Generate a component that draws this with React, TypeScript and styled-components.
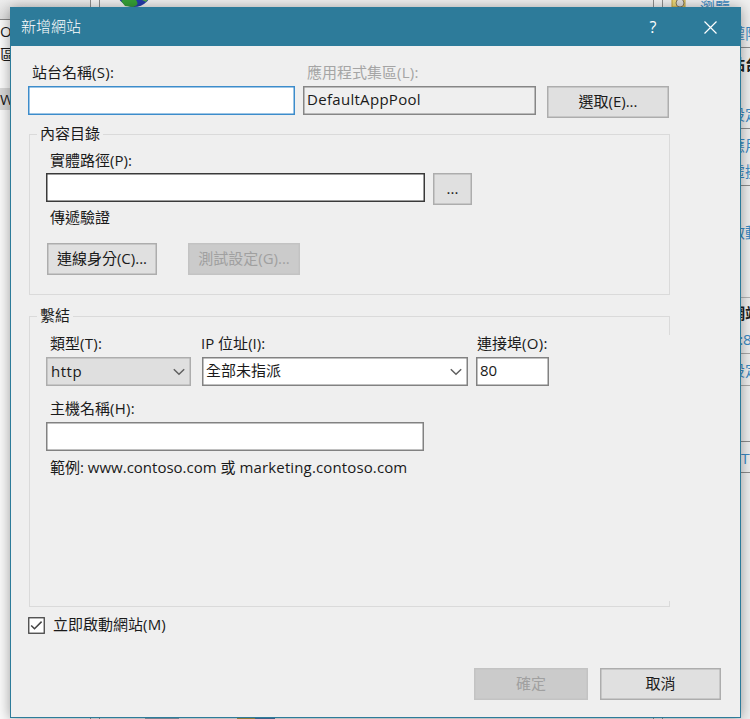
import React from "react";
import styled, { createGlobalStyle } from "styled-components";

const TEAL = "#2d7b9a";
const FACE = "#efefef";

const GlobalStyle = createGlobalStyle`
  * { box-sizing: border-box; }
  body {
    margin: 0;
    font-family: "Open Sans", "Noto Sans CJK TC", sans-serif;
    font-size: 15px;
    color: #1a1a1a;
  }
`;

const Desktop = styled.div`
  position: relative;
  width: 750px;
  height: 719px;
  overflow: hidden;
  background: #f4f4f4;
`;

/* ---- Window behind the dialog ---- */
const Manager = styled.div`
  display: flex;
  width: 860px;
  height: 719px;
  overflow: hidden;
  white-space: nowrap;
`;

const TreePane = styled.div`
  flex: none;
  width: 91px;
  border-right: 1px solid #8f8f8f;
  background: #fbfbfb;
`;

const TreeHeader = styled.div`
  height: 20px;
  background: linear-gradient(#ededed, #dedede);
  border-bottom: 1px solid #858585;
`;

const TreeItem = styled.div<{ $selected?: boolean; $top: number }>`
  height: 22px;
  margin-top: ${(p) => p.$top}px;
  line-height: 22px;
  background: ${(p) => (p.$selected ? "#d9d9d9" : "transparent")};
`;

const Content = styled.div`
  flex: none;
  width: 555px;
  margin-left: 8px;
  display: flex;
  flex-direction: column;
  justify-content: space-between;
  border: solid #8f8f8f;
  border-width: 0 1px;
  background: #f1f1f1;
`;

const ContentHeader = styled.div`
  display: flex;
  align-items: flex-start;
`;

const Globe = styled.svg`
  margin: -29px 0 0 16px;
  flex: none;
`;

const PageTitle = styled.div`
  margin: -24px 0 0 221px;
  line-height: 26px;
  font-size: 18px;
  font-weight: 600;
`;

const FeatureIcons = styled.svg`
  display: block;
`;

const ActionPane = styled.div`
  flex: 1;
  margin-left: 8px;
  background: #f0f0f0;
  border-left: 1px solid #8f8f8f;
`;

const ActionSection = styled.div<{ $height: number; $line?: string }>`
  height: ${(p) => p.$height}px;
  border-bottom: 1px solid ${(p) => p.$line ?? "#8c8c8c"};
`;

const Action = styled.div<{ $top: number; $heading?: boolean; $indent?: number }>`
  display: flex;
  box-sizing: content-box;
  height: 20px;
  line-height: 20px;
  padding-top: ${(p) => p.$top}px;
  padding-left: ${(p) => p.$indent ?? 37}px;
  color: ${(p) => (p.$heading ? "#1e1e1e" : "#3b8ac4")};
  font-weight: ${(p) => (p.$heading ? 700 : 400)};
`;

const FolderIcon = styled.svg`
  flex: none;
  margin: -7px 14px 0 -29px;
`;

const FirstAction = styled.span`
  margin-top: -3px;
`;

/* ---- Dialog ---- */
const Dialog = styled.div`
  position: absolute;
  left: 10px;
  top: 7px;
  width: 731px;
  height: 711px;
  background: ${FACE};
  border: 1px solid ${TEAL};
  box-shadow: 0 1px 13px rgba(0, 0, 0, 0.38);
  white-space: nowrap;
`;

const TitleBar = styled.div`
  display: flex;
  align-items: center;
  height: 38px;
  padding-left: 10px;
  background: ${TEAL};
  color: #fff;
  font-weight: 300;
`;

const TitleText = styled.span`
  flex: 1;
  line-height: 20px;
  padding-bottom: 2px;
`;

const HelpButton = styled.span`
  width: 12px;
  margin-right: 45px;
  text-align: center;
  font-size: 16px;
  font-weight: 400;
`;

const CloseIcon = styled.svg`
  margin-right: 23px;
`;

const Body = styled.div`
  padding: 17px 0 0 17px;
`;

const Row = styled.div<{ $top?: number; $left?: number }>`
  display: flex;
  align-items: flex-start;
  margin-top: ${(p) => p.$top ?? 0}px;
  margin-left: ${(p) => p.$left ?? 0}px;
`;

const Label = styled.div<{ $width?: number; $disabled?: boolean }>`
  flex: none;
  width: ${(p) => (p.$width ? `${p.$width}px` : "auto")};
  height: 20px;
  line-height: 19px;
  color: ${(p) => (p.$disabled ? "#a5a5a5" : "#1a1a1a")};
`;

const Latin = styled.span<{ $track?: number }>`
  font-size: 15px;
  letter-spacing: ${(p) => p.$track ?? 0}px;
`;

type FieldTone = "focus" | "dark" | "plain" | "readonly" | "list";
const borders: Record<FieldTone, string> = {
  focus: "#3c8ccb",
  dark: "#3a3a3a",
  plain: "#828282",
  readonly: "#868686",
  list: "#adadad",
};

const Field = styled.div<{ $width: number; $tone: FieldTone; $gap?: number }>`
  flex: none;
  display: flex;
  justify-content: space-between;
  width: ${(p) => p.$width}px;
  height: 29px;
  margin-right: ${(p) => p.$gap ?? 0}px;
  padding: 0 5px 0 3px;
  line-height: 25px;
  border: 1px solid ${(p) => borders[p.$tone]};
  box-shadow: inset 0 0 0 0.5px ${(p) => borders[p.$tone]};
  background: ${(p) =>
    p.$tone === "readonly" ? FACE : p.$tone === "list" ? "#dfdfdf" : "#fff"};
`;

const ListText = styled(Latin)`
  padding: 1px 0 0 1px;
`;

const Chevron = styled.svg`
  margin-top: 10px;
`;

const Button = styled.div<{ $width: number; $disabled?: boolean; $gap?: number }>`
  flex: none;
  width: ${(p) => p.$width}px;
  height: 32px;
  margin-right: ${(p) => p.$gap ?? 0}px;
  line-height: 29px;
  text-align: center;
  border: 1px solid ${(p) => (p.$disabled ? "#c3c3c3" : "#adadad")};
  box-shadow: inset 0 0 0 0.5px ${(p) => (p.$disabled ? "#c3c3c3" : "#adadad")};
  background: ${(p) => (p.$disabled ? "#cbcbcb" : "#e0e0e0")};
  color: ${(p) => (p.$disabled ? "#a0a0a0" : "#1a1a1a")};
`;

const Group = styled.fieldset<{ $height: number; $top: number; $openSide?: boolean }>`
  position: relative;
  width: 641px;
  height: ${(p) => p.$height}px;
  margin: ${(p) => p.$top}px 0 0 1px;
  padding: 0;
  border: 1px solid #dadada;

  &::after {
    content: "";
    display: ${(p) => (p.$openSide ? "block" : "none")};
    position: absolute;
    right: -1px;
    top: 8px;
    width: 1px;
    height: 266px;
    background: ${FACE};
  }
`;

const Legend = styled.legend`
  height: 21px;
  margin-left: 7px;
  padding: 0 3px;
  line-height: 19px;
`;

const CheckBox = styled.svg`
  margin: 2px 8px 0 0;
`;

const DropArrow = () => (
  <Chevron width="12" height="8" viewBox="0 0 12 8">
    <path d="M0.8 1.2 L6 6.3 L11.2 1.2" fill="none" stroke="#606060" strokeWidth="1.5" />
  </Chevron>
);

export default function App() {
  return (
    <>
      <GlobalStyle />
      <Desktop>
        <Manager>
          <TreePane>
            <TreeHeader />
            <TreeItem $top={0}>OP</TreeItem>
            <TreeItem $top={1}>區集區</TreeItem>
            <TreeItem $top={23} $selected>Web</TreeItem>
          </TreePane>
          <Content>
            <ContentHeader>
              <Globe width="36" height="36" viewBox="0 0 36 36">
                <circle cx="18" cy="18" r="18" fill="#253bab" />
                <path d="M5 30 Q13 24 20 29 Q24 34 17 36 L9 35 Z" fill="#36a137" />
                <path d="M27 18 L34 25 L30 31 L26 29 Z" fill="#4ca849" />
              </Globe>
              <PageTitle>pppp</PageTitle>
            </ContentHeader>
            <FeatureIcons width="553" height="2" viewBox="0 0 553 2">
              <path d="M45 0 H79 V2 H45 Z" fill="#8fa3b3" />
              <path d="M137 0 H155 V2 H137 Z" fill="#b39a45" />
              <path d="M155 0 H175 V2 H155 Z" fill="#4a78a8" />
            </FeatureIcons>
          </Content>
          <ActionPane>
            <ActionSection $height={48}>
              <Action $top={0}>
                <FolderIcon width="15" height="20" viewBox="0 0 15 20">
                  <path d="M1 0 H14 V14 H1 Z" fill="#ead779" stroke="#c2a13b" />
                  <circle cx="9" cy="10" r="4" fill="#ddd" stroke="#84785a" />
                </FolderIcon>
                <FirstAction>瀏覽</FirstAction>
              </Action>
              <Action $top={3}>編輯權限...</Action>
            </ActionSection>
            <ActionSection $height={81}>
              <Action $top={6} $heading>編輯站台</Action>
              <Action $top={30}>基本設定...</Action>
            </ActionSection>
            <ActionSection $height={57}>
              <Action $top={6}>檢視應用程式</Action>
              <Action $top={6}>檢視虛擬目錄</Action>
            </ActionSection>
            <ActionSection $height={112} $line="#b5b5b5">
              <Action $top={36}>重新啟動</Action>
            </ActionSection>
            <ActionSection $height={56} $line="#a8a8a8">
              <Action $top={5} $heading>瀏覽網站</Action>
              <Action $top={6} $indent={34}>瀏覽 *:80</Action>
            </ActionSection>
            <ActionSection $height={32} $line="#a8a8a8">
              <Action $top={6}>進階設定...</Action>
            </ActionSection>
            <ActionSection $height={56} />
            <ActionSection $height={31}>
              <Action $top={6} $indent={33}>新增 HTTP</Action>
            </ActionSection>
          </ActionPane>
        </Manager>

        <Dialog>
          <TitleBar>
            <TitleText>新增網站</TitleText>
            <HelpButton>?</HelpButton>
            <CloseIcon width="13" height="13" viewBox="0 0 13 13">
              <path d="M0.5 0.5 L12.5 12.5 M12.5 0.5 L0.5 12.5" stroke="#fff" strokeWidth="1.2" />
            </CloseIcon>
          </TitleBar>
          <Body>
            <Row $left={4}>
              <Label $width={275}>站台名稱<Latin $track={0.3}>(S):</Latin></Label>
              <Label $disabled>應用程式集區<Latin $track={0.3}>(L):</Latin></Label>
            </Row>
            <Row $top={3}>
              <Field $width={267} $tone="focus" $gap={8} />
              <Field $width={233} $tone="readonly" $gap={11}>
                <Latin $track={0.3}>DefaultAppPool</Latin>
              </Field>
              <Button $width={122}>選取<Latin>(E)...</Latin></Button>
            </Row>

            <Group $height={171} $top={6}>
              <Legend>內容目錄</Legend>
              <Row $top={6} $left={20}>
                <Label>實體路徑<Latin>(P):</Latin></Label>
              </Row>
              <Row $top={2} $left={16}>
                <Field $width={379} $tone="dark" $gap={8} />
                <Button $width={39}><Latin>...</Latin></Button>
              </Row>
              <Row $top={3} $left={20}>
                <Label>傳遞驗證</Label>
              </Row>
              <Row $top={15} $left={17}>
                <Button $width={110} $gap={31}>連線身分<Latin>(C)...</Latin></Button>
                <Button $width={112} $disabled>測試設定<Latin>(G)...</Latin></Button>
              </Row>
            </Group>

            <Group $height={301} $top={11} $openSide>
              <Legend>繫結</Legend>
              <Row $top={7} $left={20}>
                <Label $width={151}>類型<Latin $track={0.3}>(T):</Latin></Label>
                <Label $width={276}><Latin>IP </Latin>位址<Latin>(I):</Latin></Label>
                <Label>連接埠<Latin $track={0.3}>(O):</Latin></Label>
              </Row>
              <Row $top={3} $left={16}>
                <Field $width={145} $tone="list" $gap={11}>
                  <ListText $track={0.5}>http</ListText>
                  <DropArrow />
                </Field>
                <Field $width={266} $tone="plain" $gap={8}>
                  全部未指派
                  <DropArrow />
                </Field>
                <Field $width={73} $tone="plain"><Latin>80</Latin></Field>
              </Row>
              <Row $top={13} $left={20}>
                <Label>主機名稱<Latin $track={0.3}>(H):</Latin></Label>
              </Row>
              <Row $top={3} $left={16}>
                <Field $width={378} $tone="plain" />
              </Row>
              <Row $top={7} $left={20}>
                <Label>範例<Latin>: www.contoso.com </Latin>或<Latin $track={0.13}> marketing.contoso.com</Latin></Label>
              </Row>
            </Group>

            <Row $top={8}>
              <CheckBox width="17" height="17" viewBox="0 0 17 17">
                <rect x="0.75" y="0.75" width="15.5" height="15.5" fill="#fff" stroke="#444" strokeWidth="1.3" />
                <path d="M3.2 8.4 L6.5 11.8 L13.6 4.6" fill="none" stroke="#444" strokeWidth="1.5" />
              </CheckBox>
              <Label>立即啟動網站<Latin $track={0.2}>(M)</Latin></Label>
            </Row>

            <Row $top={33} $left={446}>
              <Button $width={114} $disabled $gap={12}>確定</Button>
              <Button $width={121}>取消</Button>
            </Row>
          </Body>
        </Dialog>
      </Desktop>
    </>
  );
}
